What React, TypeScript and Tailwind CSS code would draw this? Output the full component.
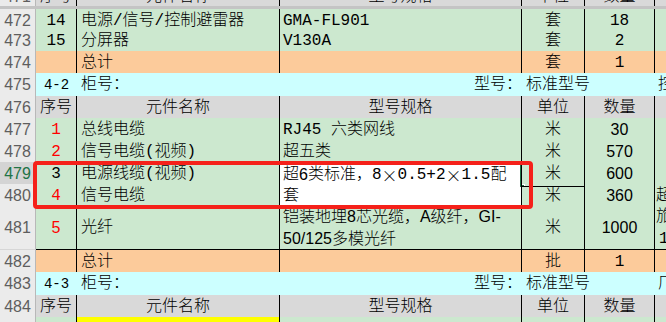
import React from 'react';

const GRID = 'grid grid-cols-[36px_41px_203px_242px_63px_70px_1fr]';
const SANS = "font-['Liberation_Sans','Noto_Sans_CJK_SC',sans-serif]";

const GREEN = 'bg-[#cce8cf]';
const ORANGE = 'bg-[#fccb9b]';
const CYAN = 'bg-[#ccffff]';
const GRAY = 'bg-[#d9d9d9]';
const BOX = 'border-r border-b border-black';

type CellProps = { children?: React.ReactNode; className?: string };

const Cell: React.FC<CellProps> = ({ children, className = '' }) => (
    <div className={`flex items-center overflow-hidden whitespace-nowrap leading-[22px] ${className}`}>
        {children}
    </div>
);

const Row: React.FC<{ h: string; n: number; active?: boolean; children: React.ReactNode }> = ({
    h,
    n,
    active,
    children,
}) => (
    <div className={`${GRID} ${h}`}>
        <div
            className={`flex items-center justify-center border-r border-r-[#b8b8b8] border-b border-b-[#d6d6d6] ${SANS} ${
                active ? 'bg-[#d4d4d4] text-[#217346]' : 'bg-[#ebebeb] text-[#5e5e5e]'
            }`}
        >
            {n}
        </div>
        {children}
    </div>
);

const HeaderRow: React.FC<{ n: number }> = ({ n }) => (
    <Row h="h-[22px]" n={n}>
        <Cell className={`${GRAY} ${BOX} justify-center`}>序号</Cell>
        <Cell className={`${GRAY} ${BOX} justify-center`}>元件名称</Cell>
        <Cell className={`${GRAY} ${BOX} justify-center`}>型号规格</Cell>
        <Cell className={`${GRAY} ${BOX} justify-center`}>单位</Cell>
        <Cell className={`${GRAY} ${BOX} justify-center`}>数量</Cell>
        <Cell className={`${GRAY} border-b border-black`} />
    </Row>
);

const CabinetRow: React.FC<{ n: number; no: string; tail: string }> = ({ n, no, tail }) => (
    <Row h="h-[23px]" n={n}>
        <Cell className={`${CYAN} border-b border-black justify-center text-[14px]`}>{no}</Cell>
        <Cell className={`${CYAN} border-b border-black pl-[4px]`}>柜号：</Cell>
        <Cell className={`${CYAN} border-b border-black justify-end`}>型号：</Cell>
        <Cell className={`${CYAN} border-b border-black col-span-2 pl-[4px]`}>标准型号</Cell>
        <Cell className={`${CYAN} border-b border-black pl-[3px]`}>{tail}</Cell>
    </Row>
);

const TotalRow: React.FC<{ n: number; unit: string }> = ({ n, unit }) => (
    <Row h="h-[22px]" n={n}>
        <Cell className={`${ORANGE} ${BOX}`} />
        <Cell className={`${ORANGE} ${BOX} pl-[4px]`}>总计</Cell>
        <Cell className={`${ORANGE} ${BOX}`} />
        <Cell className={`${ORANGE} ${BOX} justify-center`}>{unit}</Cell>
        <Cell className={`${ORANGE} ${BOX} justify-center`}>1</Cell>
        <Cell className={`${ORANGE} border-b border-black`} />
    </Row>
);

export default function App() {
    return (
        <div className="relative w-[666px] h-[322px] overflow-hidden bg-white text-[16px] font-light text-black font-['Liberation_Mono','Noto_Sans_CJK_SC',monospace]">
            {/* cut off header row above the freeze line */}
            <div className={`${GRID} h-[9px] border-b-[3px] border-b-[#c4c4c4] overflow-hidden`}>
                <div className={`flex justify-center bg-[#ebebeb] border-r border-r-[#b8b8b8] text-[#5e5e5e] ${SANS}`}>
                    <span className="-mt-[14px] leading-[22px]">471</span>
                </div>
                {['序号', '元件名称', '型号规格', '单位', '数量'].map((t) => (
                    <div key={t} className={`flex justify-center ${GRAY} border-r border-black`}>
                        <span className="-mt-[14px] leading-[22px]">{t}</span>
                    </div>
                ))}
                <div className={GRAY} />
            </div>

            <Row h="h-[20px]" n={472}>
                <Cell className={`${GREEN} ${BOX} justify-center`}>14</Cell>
                <Cell className={`${GREEN} ${BOX} pl-[4px]`}>电源/信号/控制避雷器</Cell>
                <Cell className={`${GREEN} ${BOX} pl-[3px]`}>GMA-FL901</Cell>
                <Cell className={`${GREEN} ${BOX} justify-center`}>套</Cell>
                <Cell className={`${GREEN} ${BOX} justify-center`}>18</Cell>
                <Cell className={GREEN} />
            </Row>
            <Row h="h-[22px]" n={473}>
                <Cell className={`${GREEN} ${BOX} justify-center`}>15</Cell>
                <Cell className={`${GREEN} ${BOX} pl-[4px]`}>分屏器</Cell>
                <Cell className={`${GREEN} ${BOX} pl-[3px]`}>V130A</Cell>
                <Cell className={`${GREEN} ${BOX} justify-center`}>套</Cell>
                <Cell className={`${GREEN} ${BOX} justify-center`}>2</Cell>
                <Cell className={`${GREEN} border-b border-black`} />
            </Row>
            <TotalRow n={474} unit="套" />
            <CabinetRow n={475} no="4-2" tail="控制" />
            <HeaderRow n={476} />

            <Row h="h-[22px]" n={477}>
                <Cell className={`${GREEN} ${BOX} justify-center text-[#ff0000]`}>1</Cell>
                <Cell className={`${GREEN} ${BOX} pl-[4px]`}>总线电缆</Cell>
                <Cell className={`${GREEN} ${BOX} pl-[3px]`}>RJ45 六类网线</Cell>
                <Cell className={`${GREEN} ${BOX} justify-center`}>米</Cell>
                <Cell className={`${GREEN} ${BOX} justify-center ${SANS}`}>30</Cell>
                <Cell className={GREEN} />
            </Row>
            <Row h="h-[22px]" n={478}>
                <Cell className={`${GREEN} ${BOX} justify-center text-[#ff0000]`}>2</Cell>
                <Cell className={`${GREEN} ${BOX} pl-[4px]`}>信号电缆(视频)</Cell>
                <Cell className={`${GREEN} ${BOX} pl-[3px]`}>超五类</Cell>
                <Cell className={`${GREEN} ${BOX} justify-center`}>米</Cell>
                <Cell className={`${GREEN} ${BOX} justify-center ${SANS}`}>570</Cell>
                <Cell className={GREEN} />
            </Row>
            <Row h="h-[22px]" n={479} active>
                <Cell className={`${GREEN} ${BOX} justify-center`}>3</Cell>
                <Cell className={`${GREEN} ${BOX} pl-[4px]`}>电源线缆(视频)</Cell>
                <Cell className="relative bg-white border-r border-black pl-[3px]">
                    <span className="absolute left-[-2px] top-0 h-full w-[2px] bg-[#217346]" />
                    <span className="absolute right-[-1px] top-0 h-full w-[2px] bg-[#217346]" />
                    超<span className={SANS}>6</span>类标准，8<span className="font-['Noto_Sans_CJK_SC']">×</span>0.5+2<span className="font-['Noto_Sans_CJK_SC']">×</span>1.5配
                </Cell>
                <Cell className={`relative ${GREEN} ${BOX} justify-center`}>
                    <span className="absolute left-[-2px] bottom-[-3px] h-[5px] w-[5px] bg-[#217346] border border-white" />
                    米
                </Cell>
                <Cell className={`${GREEN} ${BOX} justify-center ${SANS}`}>600</Cell>
                <Cell className={GREEN} />
            </Row>
            <Row h="h-[22px]" n={480}>
                <Cell className={`${GREEN} ${BOX} justify-center text-[#ff0000]`}>4</Cell>
                <Cell className={`${GREEN} ${BOX} pl-[4px]`}>信号电缆</Cell>
                <Cell className={`bg-white ${BOX} pl-[3px]`}>套</Cell>
                <Cell className={`${GREEN} ${BOX} justify-center`}>米</Cell>
                <Cell className={`${GREEN} ${BOX} justify-center ${SANS}`}>360</Cell>
                <Cell className={`${GREEN} border-b border-black pl-[1px]`}>超</Cell>
            </Row>
            <Row h="h-[44px]" n={481}>
                <Cell className={`${GREEN} ${BOX} justify-center text-[#ff0000] ${SANS}`}>5</Cell>
                <Cell className={`${GREEN} ${BOX} pl-[4px]`}>光纤</Cell>
                <Cell className={`${GREEN} ${BOX} pl-[3px] ${SANS}`}>
                    <div className="flex flex-col">
                        <span>铠装地埋8芯光缆，A级纤，GI-</span>
                        <span>50/125多模光纤</span>
                    </div>
                </Cell>
                <Cell className={`${GREEN} ${BOX} justify-center`}>米</Cell>
                <Cell className={`${GREEN} ${BOX} justify-center ${SANS}`}>1000</Cell>
                <Cell className={`${GREEN} border-b border-black pl-[1px]`}>
                    <div className="flex flex-col">
                        <span>旅</span>
                        <span className="pl-[3px]">1</span>
                    </div>
                </Cell>
            </Row>
            <TotalRow n={482} unit="批" />
            <CabinetRow n={483} no="4-3" tail="厂家" />
            <HeaderRow n={484} />
            <Row h="h-[22px]" n={485}>
                <Cell className={`${GREEN} ${BOX}`} />
                <Cell className={`bg-[#ffff00] ${BOX}`} />
                <Cell className={`${GREEN} ${BOX}`} />
                <Cell className={`${GREEN} ${BOX}`} />
                <Cell className={`${GREEN} ${BOX}`} />
                <Cell className={GREEN} />
            </Row>

            {/* red annotation box */}
            <div className="pointer-events-none absolute left-[33px] top-[161px] h-[48px] w-[500px] rounded-[4px] border-4 border-[#f5211a]" />
        </div>
    );
}
